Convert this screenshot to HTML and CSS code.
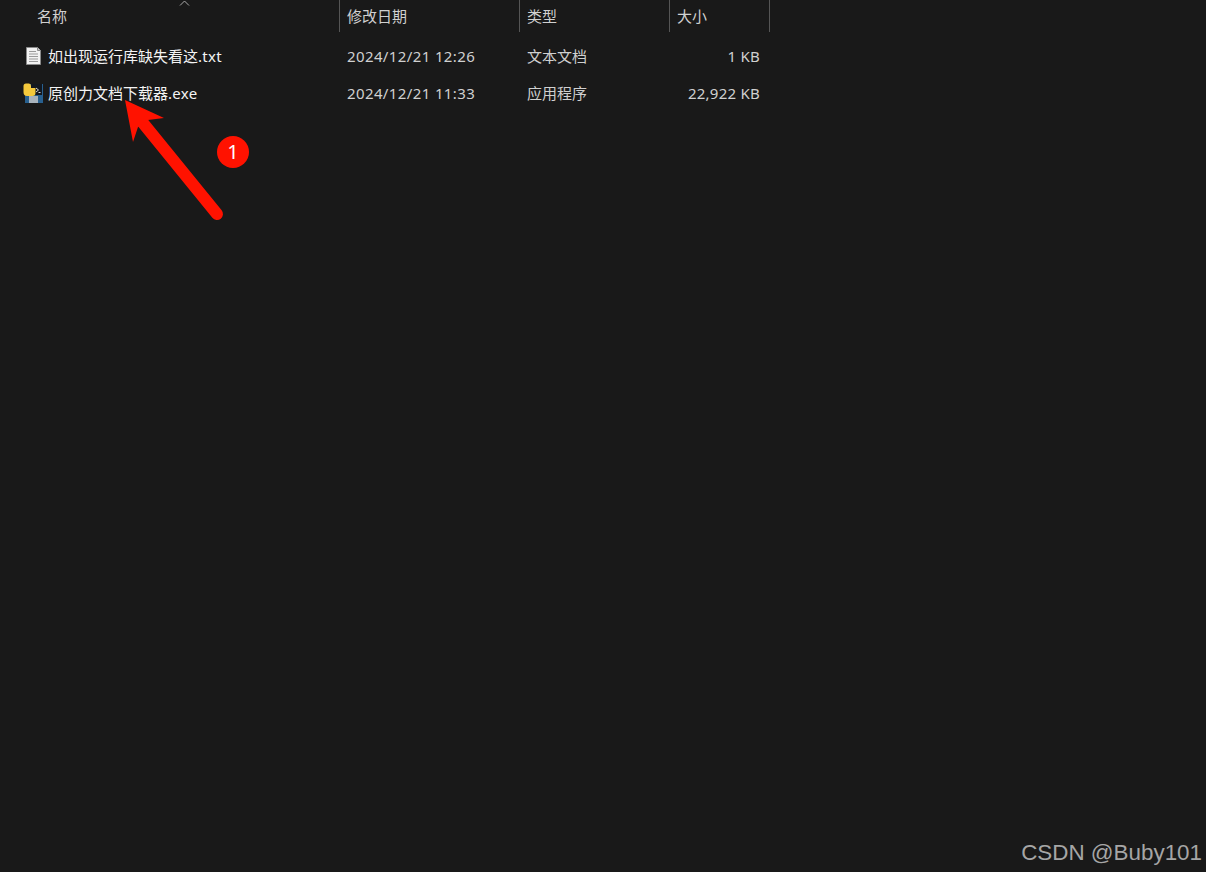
FILE: index.html
```html
<!DOCTYPE html>
<html lang="zh-CN">
<head>
  <meta charset="UTF-8">
  <title>原创力文档下载器</title>
  <link rel="stylesheet" href="styles.css">
</head>
<body>
  <div class="file-list">
    <div class="list-row list-head">
      <div class="head-cell head-name">名称
        <svg class="sort-caret" width="12" height="6" viewBox="0 0 12 6"><path d="M1 5.5 L5.5 1 L10 5.5" fill="none" stroke="#a8a8a8" stroke-width="1"/></svg>
      </div>
      <div class="head-cell">修改日期</div>
      <div class="head-cell">类型</div>
      <div class="head-cell">大小</div>
    </div>

    <div class="list-row file-row">
      <div class="file-name">
        <svg class="file-icon" width="20" height="22" viewBox="0 0 20 22">
          <path d="M3.5 1.5 H14.5 L17.5 4.5 V18.5 H3.5 Z" fill="#f2f2f2" stroke="#8a8a8a"/>
          <path d="M14.5 1.5 V4.5 H17.5" fill="#c8c8c8" stroke="#8a8a8a"/>
          <path d="M6 5.5 H13 M6 8 H15 M6 10.5 H15 M6 13 H15 M6 15.5 H15" stroke="#9a9a9a" stroke-width="1"/>
        </svg>
        <span>如出现运行库缺失看这<span class="file-ext">.txt</span></span>
      </div>
      <div class="file-cell file-date">2024/12/21 12:26</div>
      <div class="file-cell">文本文档</div>
      <div class="file-cell file-size">1 KB</div>
    </div>

    <div class="list-row file-row">
      <div class="file-name">
        <svg class="file-icon" width="20" height="22" viewBox="0 0 20 22">
          <rect x="2" y="1" width="18" height="19" fill="#28608f"/>
          <rect x="8" y="1" width="11" height="11" fill="#12171f"/>
          <path d="M13 5 L15.5 7 L13 9 M15.5 9.5 H17.5" fill="none" stroke="#d8d8d8"/>
          <rect x="6" y="13" width="9" height="7" fill="#a9b3bc"/>
          <path d="M0.5 3 Q0.5 0.5 3 0.5 H6 Q8 0.5 8 3 V5 H12.5 V10 Q12.5 13 9.5 13 H4 Q0.5 13 0.5 9 Z" fill="#f4c93c"/>
        </svg>
        <span>原创力文档下载器<span class="file-ext">.exe</span></span>
      </div>
      <div class="file-cell file-date">2024/12/21 11:33</div>
      <div class="file-cell">应用程序</div>
      <div class="file-cell file-size">22,922 KB</div>
    </div>
  </div>

  <!-- red markup drawn over the list -->
  <svg class="arrow" width="260" height="240" viewBox="0 0 260 240">
    <path d="M143 123 L217 214" stroke="#ff1200" stroke-width="12" stroke-linecap="round" fill="none"/>
    <path d="M125 100 L164 118 L148 120 L138 127 L133 142 Z" fill="#ff1200"/>
  </svg>
  <div class="badge">1</div>

  <div class="watermark">CSDN @Buby101</div>
</body>
</html>
```

FILE: styles.css
```css
html, body {
  height: 100%;
}
body {
  margin: 0;
  background-color: #191919;
  font-family: "Noto Sans", "Noto Sans CJK SC", sans-serif;
  font-size: 15px;
  overflow: hidden;
}
.list-row {
  display: grid;
  grid-template-columns: 340px 180px 150px 100px;
  width: 770px;
}
.list-head {
  height: 32px;
  margin-bottom: 6px;
}
.head-cell {
  position: relative;
  border-right: 1px solid #555;
  padding-left: 7px;
  line-height: 32px;
  color: #d0d0d0;
}
.head-name {
  padding-left: 37px;
}
.sort-caret {
  position: absolute;
  left: 179px;
  top: 0;
}
.file-row {
  height: 37px;
  line-height: 37px;
}
.file-name {
  display: flex;
  align-items: center;
  padding-left: 23px;
  color: #f4f4f4;
}
.file-ext {
  letter-spacing: 0.3px;
}
.file-icon {
  margin-right: 5px;
  flex-shrink: 0;
}
.file-cell {
  padding-left: 7px;
  color: #d0d0d0;
}
.file-date {
  letter-spacing: 0.38px;
}
.file-size {
  padding: 0 10px 0 0;
  text-align: right;
  letter-spacing: 0.25px;
}
.arrow {
  position: absolute;
  left: 0;
  top: 0;
}
.badge {
  position: absolute;
  left: 217px;
  top: 136px;
  width: 32px;
  height: 32px;
  border-radius: 50%;
  background-color: #ff1200;
  color: #fff;
  font-size: 20px;
  line-height: 32px;
  text-align: center;
}
.watermark {
  position: absolute;
  right: 4px;
  bottom: 6px;
  font-family: "Liberation Sans", sans-serif;
  font-size: 22.4px;
  color: #a6a6a6;
}
```
